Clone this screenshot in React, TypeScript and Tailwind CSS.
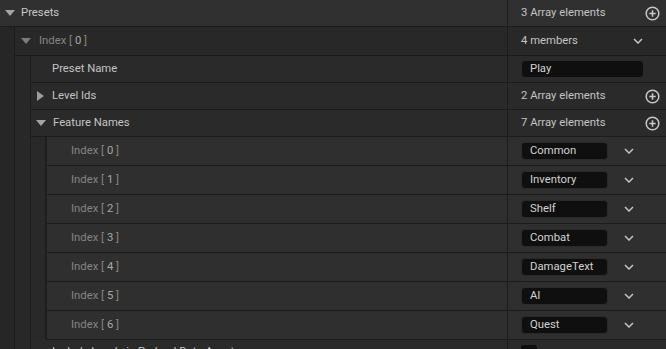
import React from 'react';

const FONT = { fontFamily: 'Roboto, "Noto Sans", sans-serif' };

const PlusCircle: React.FC = () => (
  <svg width="15" height="15" viewBox="0 0 15 15" className="text-[#c8c8c8]">
    <circle cx="7.5" cy="7.5" r="6.3" fill="none" stroke="currentColor" strokeWidth="1.5" />
    <path d="M7.5 4.3v6.4M4.3 7.5h6.4" stroke="currentColor" strokeWidth="1.6" />
  </svg>
);

const Chevron: React.FC = () => (
  <svg width="10" height="6" viewBox="0 0 10 6" className="text-[#c4c4c4]">
    <path d="M1 1l4 4 4-4" fill="none" stroke="currentColor" strokeWidth="1.5" />
  </svg>
);

const ArrowDown: React.FC<{ color: string }> = ({ color }) => (
  <svg width="10" height="6" viewBox="0 0 10 6">
    <path d="M0 0h10L5 6z" fill={color} />
  </svg>
);

const ArrowRight: React.FC = () => (
  <svg width="7" height="10" viewBox="0 0 7 10">
    <path d="M0 0l7 5-7 5z" fill="#9c9c9c" />
  </svg>
);

// indent strips on the left of nested rows
const Strips: React.FC<{ depth: number }> = ({ depth }) => (
  <>
    {depth > 0 && <div className="h-full w-[15px] shrink-0 border-r border-[#1c1c1c] bg-[#262626]" />}
    {depth > 1 && <div className="h-full w-[16px] shrink-0 border-r border-[#1e1e1e] bg-[#282828]" />}
    {depth > 2 && <div className="h-full w-[16px] shrink-0 border-r-2 border-[#1e1e1e] bg-[#292929]" />}
  </>
);

type RowProps = {
  depth: number;
  height: string;
  bg: string;
  name: React.ReactNode;
  value: React.ReactNode;
};

const Row: React.FC<RowProps> = ({ depth, height, bg, name, value }) => (
  <div className={`flex ${height}`}>
    <Strips depth={depth} />
    <div className={`flex flex-1 border-b border-[#1b1b1b] ${bg}`}>
      <div className="flex flex-1 items-center border-r border-[#1c1c1c]">{name}</div>
      <div className="flex w-[158px] shrink-0 items-center pl-[13px]">{value}</div>
    </div>
  </div>
);

const IndexLabel: React.FC<{ n: number }> = ({ n }) => (
  <span className="text-[#858585]">
    Index [ <span className="text-[#a8a8a8]">{n}</span> ]
  </span>
);

const TextBox: React.FC<{ text: string; w: string }> = ({ text, w }) => (
  <div className={`flex h-[18px] ${w} items-start rounded-[4px] border border-[#2a2a2a] bg-[#0f0f0f] pl-[8px] pt-[1px] text-[#d2d2d2]`}>
    {text}
  </div>
);

const features = ['Common', 'Inventory', 'Shelf', 'Combat', 'DamageText', 'AI', 'Quest'];

export default function App() {
  return (
    <div className="h-[349px] w-[666px] overflow-hidden bg-[#262626] text-[11.3px] leading-[14px] text-[#c4c4c4]" style={FONT}>
      <Row
        depth={0}
        height="h-[27px]"
        bg="bg-[#303030]"
        name={
          <div className="flex items-center pl-[5px]">
            <ArrowDown color="#a4a4a4" />
            <span className="ml-[6px] text-[#c8c8c8]">Presets</span>
          </div>
        }
        value={
          <div className="flex w-full items-center justify-between pr-[6px]">
            <span>3 Array elements</span>
            <PlusCircle />
          </div>
        }
      />
      <Row
        depth={1}
        height="h-[29px]"
        bg="bg-[#282828]"
        name={
          <div className="flex items-center pl-[6px]">
            <ArrowDown color="#7c7c7c" />
            <span className="ml-[8px]">
              <IndexLabel n={0} />
            </span>
          </div>
        }
        value={
          <div className="flex w-full items-center justify-between pr-[23px]">
            <span>4 members</span>
            <Chevron />
          </div>
        }
      />
      <Row
        depth={2}
        height="h-[27px]"
        bg="bg-[#2a2a2a]"
        name={<span className="pl-[21px]">Preset Name</span>}
        value={<TextBox text="Play" w="w-[123px]" />}
      />
      <Row
        depth={2}
        height="h-[27px]"
        bg="bg-[#2a2a2a]"
        name={
          <div className="flex items-center pl-[6px]">
            <ArrowRight />
            <span className="ml-[8px]">Level Ids</span>
          </div>
        }
        value={
          <div className="flex w-full items-center justify-between pr-[6px]">
            <span>2 Array elements</span>
            <PlusCircle />
          </div>
        }
      />
      <Row
        depth={2}
        height="h-[27px]"
        bg="bg-[#2a2a2a]"
        name={
          <div className="flex items-center pl-[5px]">
            <ArrowDown color="#a4a4a4" />
            <span className="ml-[7px]">Feature Names</span>
          </div>
        }
        value={
          <div className="flex w-full items-center justify-between pr-[6px]">
            <span>7 Array elements</span>
            <PlusCircle />
          </div>
        }
      />
      {features.map((f, i) => (
        <Row
          key={f}
          depth={3}
          height="h-[29px]"
          bg="bg-[#2f2f2f]"
          name={
            <span className="pl-[24px]">
              <IndexLabel n={i} />
            </span>
          }
          value={
            <div className="flex items-center">
              <TextBox text={f} w="w-[87px]" />
              <span className="ml-[16px]">
                <Chevron />
              </span>
            </div>
          }
        />
      ))}
      <div className="flex h-[27px]">
        <Strips depth={2} />
        <div className="flex flex-1 bg-[#2a2a2a]">
          <div className="flex flex-1 items-start border-r border-[#1c1c1c] pl-[21px] pt-[5px]">
            Include Levels in Preload Data Assets
          </div>
          <div className="w-[158px] shrink-0 pl-[13px] pt-[5px]">
            <div className="h-[16px] w-[16px] rounded-[3px] bg-[#0f0f0f]" />
          </div>
        </div>
      </div>
    </div>
  );
}
